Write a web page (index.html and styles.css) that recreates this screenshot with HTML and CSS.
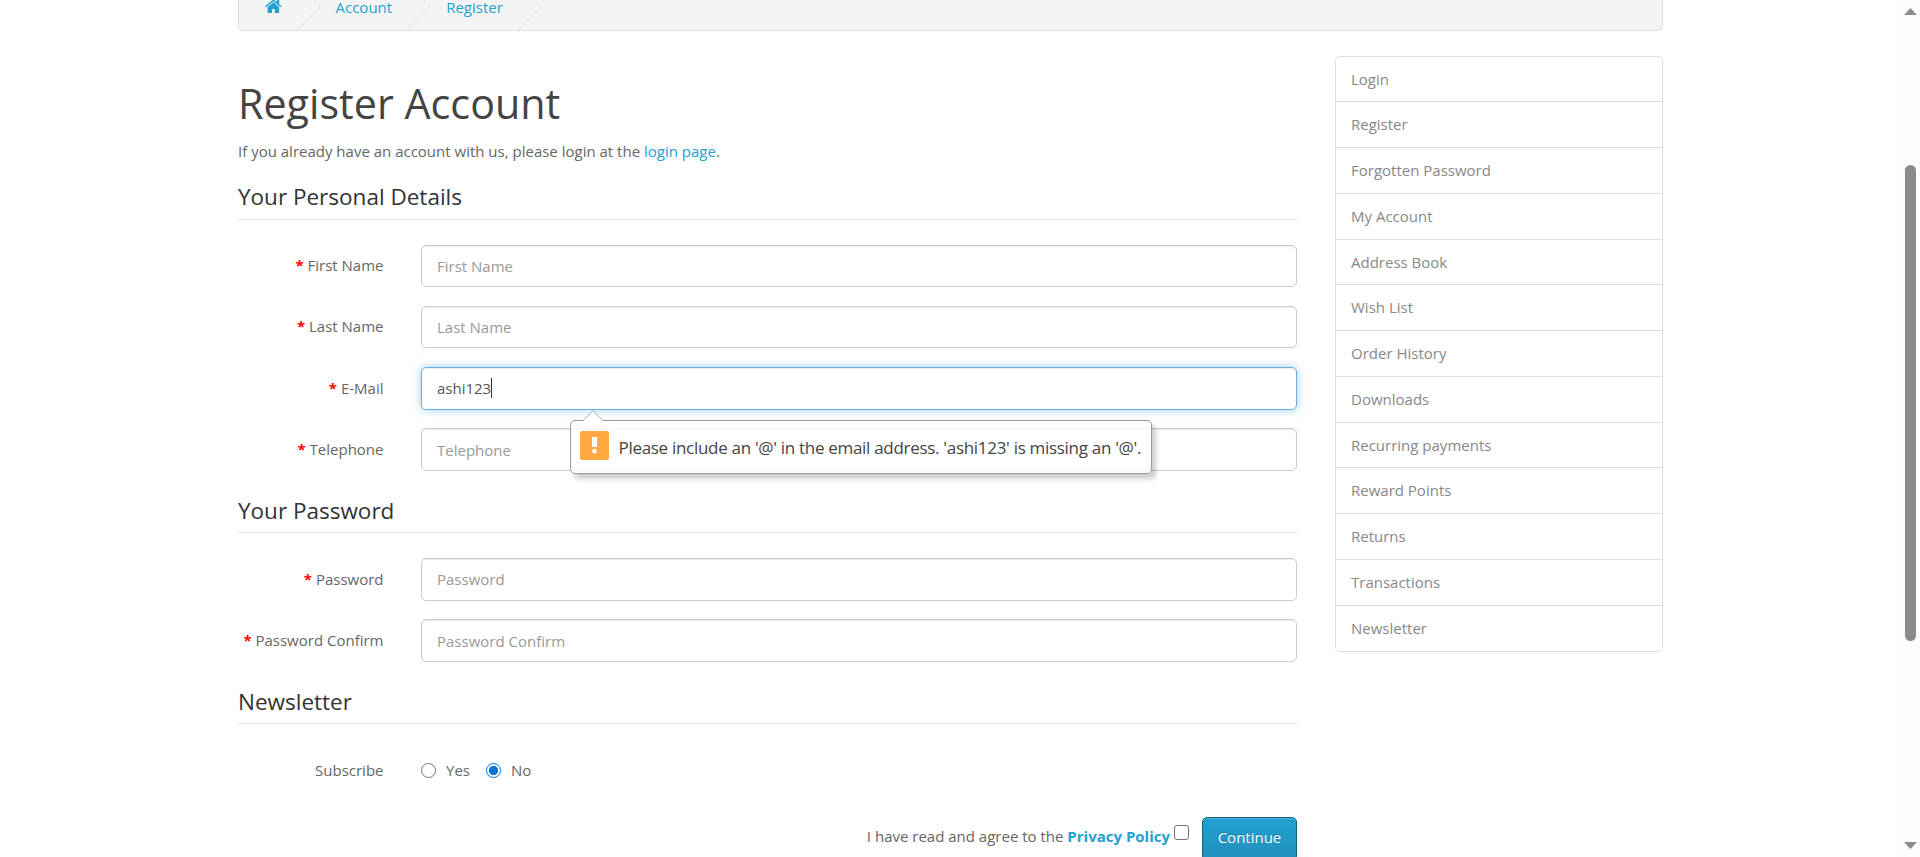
FILE: index.html
```html
<!DOCTYPE html>
<html lang="en">
<head>
<meta charset="utf-8">
<title>Register Account</title>
<link rel="stylesheet" href="styles.css">
</head>
<body>
<div class="page">
  <div class="container">
    <nav class="breadcrumb">
      <a class="crumb" href="#" aria-label="Home"><svg class="home" viewBox="0 0 17 15"><path d="M8.4 3.3 2.6 8.1v5.2c0 .4.3.7.7.7h3.8V9.9h2.6V14h3.8c.4 0 .7-.3.7-.7V8.1z"/><path d="M16.5 6.9 14.2 5V1.2c0-.2-.1-.3-.3-.3H12c-.2 0-.3.1-.3.3V3L9.300 1C8.800.6 8 .6 7.500 1L.3 6.900c-.2.1-.2.300 0 .5l.5.600c.1.200.300.200.5 0L8.400 2.200l7.100 5.800c.200.200.400.100.5 0l.500-.600c.100-.200.100-.4 0-.5z"/></svg></a>
      <svg class="sep" viewBox="0 0 25 30"><path d="M17 -.5 24 7 .5 30.500"/></svg>
      <a class="crumb" href="#">Account</a>
      <svg class="sep" viewBox="0 0 25 30"><path d="M17 -.5 24 7 .5 30.500"/></svg>
      <a class="crumb" href="#">Register</a>
      <svg class="sep" viewBox="0 0 25 30"><path d="M17 -.5 24 7 .5 30.500"/></svg>
    </nav>
    <div class="columns">
      <main class="content">
        <h1>Register Account</h1>
        <p class="intro">If you already have an account with us, please login at the <a href="#">login page</a>.</p>
        <form>
          <section class="fieldset">
            <h2 class="legend">Your Personal Details</h2>
            <div class="group"><label class="label required">First Name</label><div class="field">First Name</div></div>
            <div class="group"><label class="label required">Last Name</label><div class="field">Last Name</div></div>
            <div class="group">
              <label class="label required">E-Mail</label>
              <div class="field focused">ashi123<span class="caret"></span>
                <div class="bubble">
                  <svg class="arrow" viewBox="0 0 20 11"><path class="fill" d="M0 11 10 .7 20 11z"/><path class="edge" d="M0 10.500 10 .7 20 10.500"/></svg>
                  <svg class="warn" viewBox="0 0 29 29"><rect width="29" height="29" rx="2"/><path d="M12 6h5v10h-5z"/><circle cx="14.500" cy="20.200" r="2.400"/></svg>
                  <span class="message">Please include an '@' in the email address. 'ashi123' is missing an '@'.</span>
                </div>
              </div>
            </div>
            <div class="group"><label class="label required">Telephone</label><div class="field">Telephone</div></div>
          </section>
          <section class="fieldset">
            <h2 class="legend">Your Password</h2>
            <div class="group"><label class="label required">Password</label><div class="field">Password</div></div>
            <div class="group"><label class="label required">Password Confirm</label><div class="field">Password Confirm</div></div>
          </section>
          <section class="fieldset">
            <h2 class="legend">Newsletter</h2>
            <div class="group">
              <label class="label">Subscribe</label>
              <div class="options">
                <span class="radio"></span><span class="option">Yes</span>
                <span class="radio checked"></span><span class="option">No</span>
              </div>
            </div>
          </section>
          <div class="actions">
            <span class="agree">I have read and agree to the <a href="#"><b>Privacy Policy</b></a></span>
            <span class="checkbox"></span>
            <button class="button" type="button">Continue</button>
          </div>
        </form>
      </main>
      <aside class="menu">
        <a href="#">Login</a>
        <a href="#">Register</a>
        <a href="#">Forgotten Password</a>
        <a href="#">My Account</a>
        <a href="#">Address Book</a>
        <a href="#">Wish List</a>
        <a href="#">Order History</a>
        <a href="#">Downloads</a>
        <a href="#">Recurring payments</a>
        <a href="#">Reward Points</a>
        <a href="#">Returns</a>
        <a href="#">Transactions</a>
        <a href="#">Newsletter</a>
      </aside>
    </div>
  </div>
  <div class="scrollbar">
    <svg class="tri" viewBox="0 0 13 7"><path d="M0 7 6.500 0 13 7z"/></svg>
    <div class="thumb"></div>
    <svg class="tri" viewBox="0 0 13 7"><path d="M0 0h13L6.500 7z"/></svg>
  </div>
</div>
</body>
</html>
```
FILE: styles.css
```css
* {
  box-sizing: border-box;
}

body {
  margin: 0;
  background: #fff;
  color: #666;
  font: 15px/25px "Open Sans", "Noto Sans", sans-serif;
  overflow: hidden;
}

a {
  color: #23a1d1;
  text-decoration: none;
}

.page {
  display: flex;
  height: 857px;
  overflow: hidden;
}

.container {
  width: 1425px;
  margin-left: 238px;
}

/* Breadcrumb */
.breadcrumb {
  display: flex;
  height: 31px;
  padding-left: 25.500px;
  background: #f4f4f4;
  border: 1px solid #ddd;
  border-top: 0;
  border-radius: 0 0 5px 5px;
}

.crumb {
  line-height: 14px;
}

.home {
  display: block;
  width: 17px;
  height: 15px;
  margin-top: -1px;
  fill: #23a1d1;
}

.sep {
  width: 25px;
  height: 30px;
  margin: 0 15px 0 14px;
  fill: none;
  stroke: #ddd;
}

/* Columns */
.columns {
  display: flex;
  align-items: flex-start;
  justify-content: space-between;
  margin-top: 25px;
}

.content {
  width: 1059px;
}

h1 {
  margin: 25px 0 12.500px;
  color: #444;
  font-size: 41.250px;
  font-weight: 400;
  line-height: 45.100px;
}

.intro {
  margin: 0 0 12.500px;
}

.legend {
  margin: 0 0 25px;
  padding: 8px 0 9.500px;
  border-bottom: 1px solid #e5e5e5;
  color: #333;
  font-size: 22.500px;
  font-weight: 400;
  line-height: 25px;
}

.group {
  display: flex;
  justify-content: space-between;
  height: 42.500px;
  margin-bottom: 18.750px;
}

.label {
  width: 145.500px;
  padding-top: 8.500px;
  text-align: right;
  white-space: nowrap;
}

.required::before {
  content: "* ";
  color: #f00;
  font-weight: 700;
}

.field {
  position: relative;
  width: 876px;
  height: 42.500px;
  padding: 8.300px 15px;
  background: #fff;
  border: 1px solid #ccc;
  border-radius: 5px;
  box-shadow: inset 0 1px 1px rgba(0, 0, 0, .075);
  color: #999;
}

.focused {
  display: flex;
  border-color: #66afe9;
  box-shadow: inset 0 1px 1px rgba(0, 0, 0, .075), 0 0 10px rgba(102, 175, 233, .6);
  color: #555;
}

.caret {
  width: 1px;
  height: 20px;
  margin-top: 2px;
  background: #333;
}

/* Validation bubble */
.bubble {
  position: absolute;
  z-index: 2;
  top: 52px;
  left: 147.500px;
  display: flex;
  width: 582.500px;
  height: 54px;
  padding: 10px 0 0 9.500px;
  background: rgba(255, 255, 255, .8);
  border: 1px solid #999;
  border-radius: 5px;
  box-shadow: 4px 5px 5px rgba(0, 0, 0, .2);
  color: #444;
}

.arrow {
  position: absolute;
  top: -11px;
  left: 12px;
  width: 20px;
  height: 11px;
}

.arrow .fill {
  fill: #fff;
}

.arrow .edge {
  fill: none;
  stroke: #aaa;
}

.warn {
  width: 29px;
  height: 29px;
  margin-right: 9.500px;
  fill: #fff;
}

.warn rect {
  fill: #ffa940;
}

.message {
  font-size: 17px;
  line-height: 33px;
  letter-spacing: -.3px;
  white-space: nowrap;
}

/* Newsletter options */
.options {
  display: flex;
  width: 876px;
  padding-top: 8.500px;
}

.radio {
  width: 15px;
  height: 15px;
  margin: 5px 10px 0 0;
  border: 1px solid #767676;
  border-radius: 50%;
}

.checked {
  border-color: #0075d7;
  background: radial-gradient(circle, #0075d7 4.300px, #fff 5px);
}

.option {
  margin-right: 16px;
}

/* Footer actions */
.actions {
  display: flex;
  justify-content: flex-end;
  align-items: flex-start;
  padding-top: 6.500px;
}

.agree {
  padding-top: 7px;
}

.checkbox {
  width: 15px;
  height: 15px;
  margin: 8.500px 13px 0 4px;
  border: 1px solid #767676;
  border-radius: 3px;
}

.button {
  width: 95px;
  height: 44px;
  padding: 0 0 3px;
  background: linear-gradient(#23a1d1, #1f90bb);
  border: 1px solid #145e7a;
  border-radius: 5px;
  box-shadow: inset 0 1px 0 rgba(255, 255, 255, .2);
  color: #fff;
  font: inherit;
  text-shadow: 0 -1px 0 rgba(0, 0, 0, .25);
}

/* Account menu */
.menu {
  display: flex;
  flex-direction: column;
  width: 328px;
  border: 1px solid #ddd;
  border-radius: 5px;
}

.menu a {
  height: 45.750px;
  padding: 10px 15px;
  color: #888;
}

.menu a + a {
  padding-top: 10.100px;
  border-top: 1px solid #ddd;
}

.menu a:first-child {
  height: 44.250px;
}

.menu a:last-child {
  height: 46.500px;
}

/* Page scrollbar */
.scrollbar {
  display: flex;
  flex-direction: column;
  align-items: center;
  justify-content: space-between;
  width: 19px;
  margin-left: auto;
  padding: 8px 0;
  background: #fcfcfc;
}

.tri {
  width: 13px;
  height: 7px;
  fill: #8b8b8b;
}

.thumb {
  width: 11px;
  height: 476px;
  margin-bottom: 51px;
  background: #8b8b8b;
  border-radius: 6px;
}
```
